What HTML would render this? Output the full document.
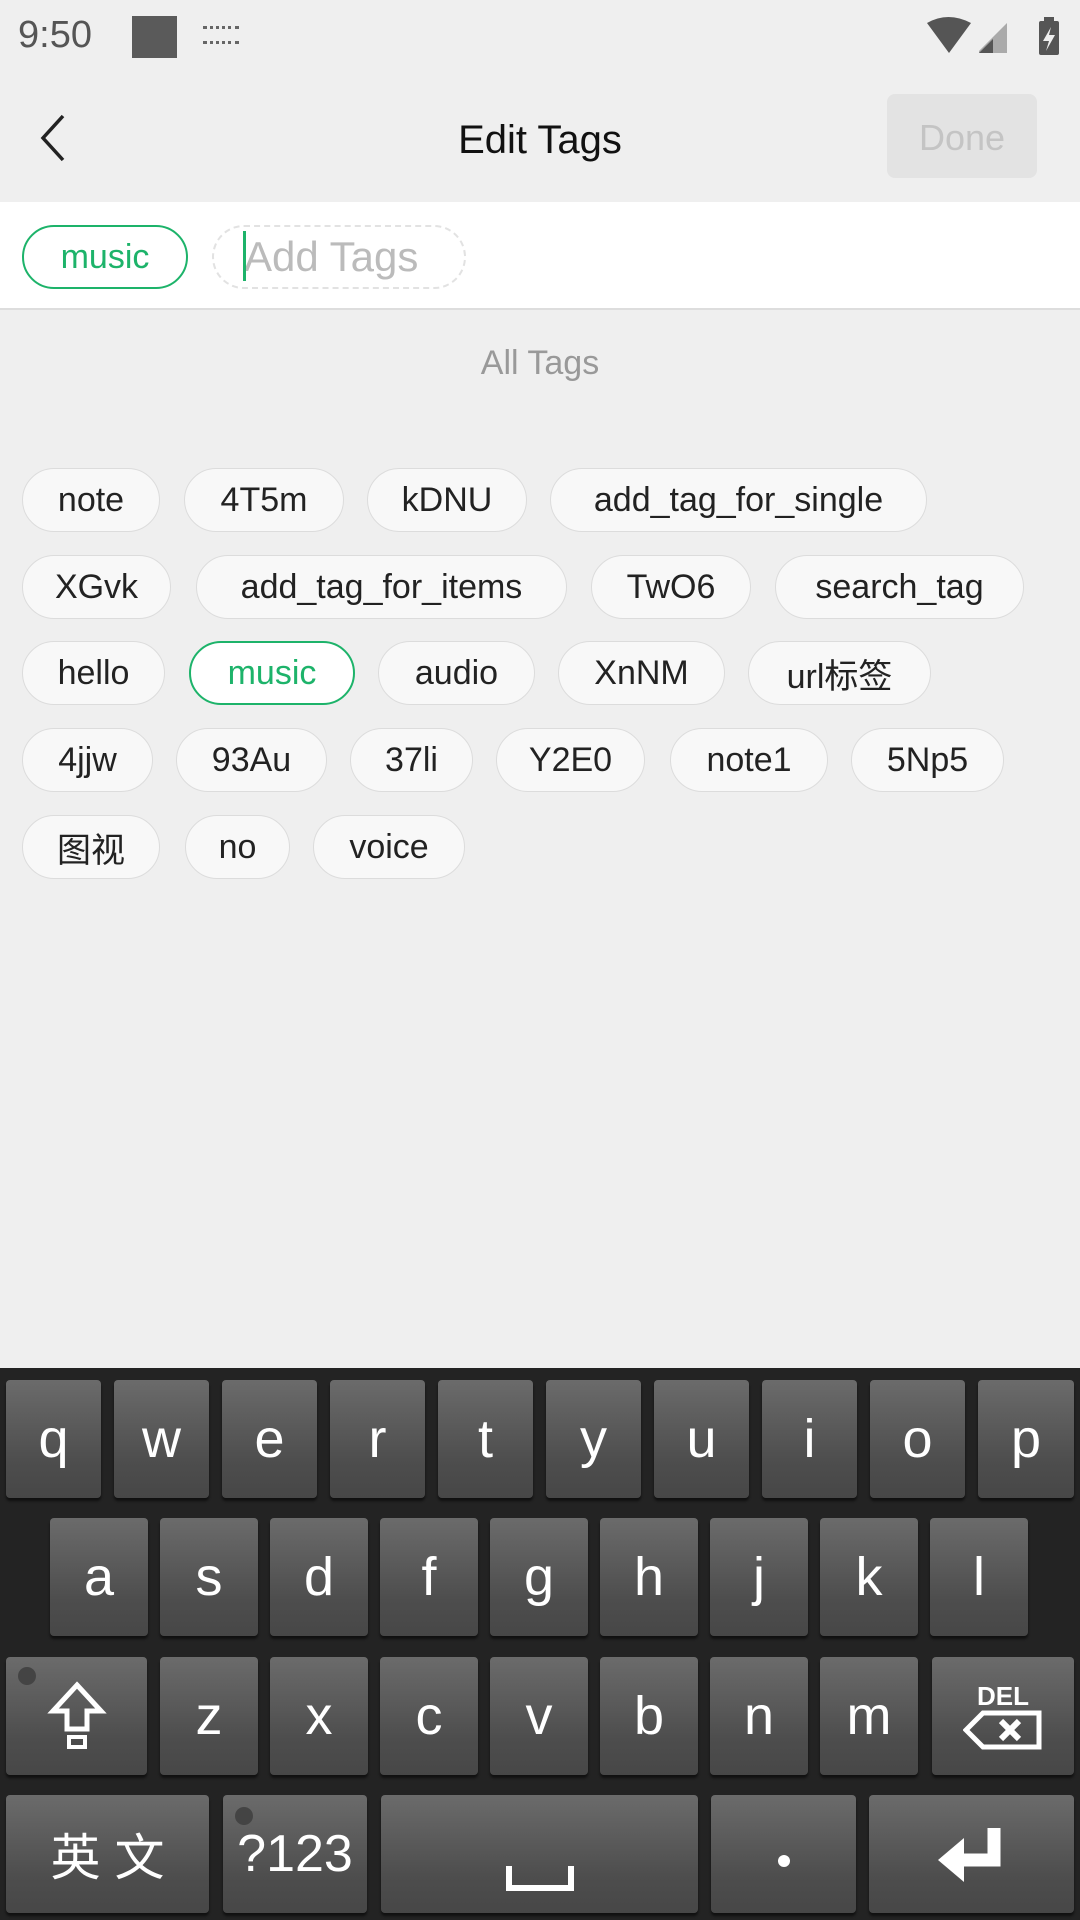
<!DOCTYPE html>
<html><head><meta charset="utf-8"><style>
*{margin:0;padding:0;box-sizing:border-box}
body{width:1080px;height:1920px;background:#efefef;font-family:"Liberation Sans","Noto Sans CJK SC",sans-serif;position:relative;overflow:hidden}
.a{position:absolute}
.tag{position:absolute;height:64px;border:1.5px solid #dcdcdc;background:#f8f8f8;border-radius:32px;font-size:34px;color:#222;display:flex;align-items:center;justify-content:center;white-space:nowrap}
.tag.g{border:2px solid #1db36a;color:#1db36a;background:#fff}
.kb{position:absolute;left:0;top:1368px;width:1080px;height:552px;background:#232323}
.k{position:absolute;border-radius:4px;background:linear-gradient(#6b6b6b,#4d4d4d 70%,#474747);box-shadow:0 3px 2px #111;color:#fff;font-size:54px;display:flex;align-items:center;justify-content:center;font-family:"Liberation Sans","Noto Sans CJK SC",sans-serif}
</style></head><body>
<div class="a" style="left:18px;top:14px;font-size:38px;color:#555">9:50</div>
<div class="a" style="left:132px;top:16px;width:45px;height:42px;background:#5a5a5a"></div>
<div class="a" style="left:203px;top:26px;width:36px;height:18px;border-top:3px dotted #666;border-bottom:3px dotted #666"></div>
<svg class="a" style="left:925px;top:15px" width="135" height="42" viewBox="0 0 135 42">
<path d="M2 8 Q23 -4 46 8 L24 38 Z" fill="#555"/>
<path d="M54 38 L54 36 L82 8 L82 38 Z" fill="#aaa"/><path d="M54 38 L68 24 L68 38Z" fill="#555"/>
<rect x="114" y="6" width="20" height="34" rx="2" fill="#555"/><rect x="119" y="2" width="10" height="5" fill="#555"/>
<path d="M126 12 L118 26 L124 26 L121 36 L130 20 L124 20 Z" fill="#eee"/>
</svg>
<svg class="a" style="left:38px;top:114px" width="30" height="48" viewBox="0 0 30 48"><path d="M25 2 L5 24 L25 46" fill="none" stroke="#222" stroke-width="3.5"/></svg>
<div class="a" style="left:0;width:1080px;top:118px;text-align:center;font-size:40px;color:#111">Edit Tags</div>
<div class="a" style="left:887px;top:94px;width:150px;height:84px;background:#e3e3e3;border-radius:8px;color:#c4c4c4;font-size:36px;display:flex;align-items:center;justify-content:center;padding-top:4px">Done</div>
<div class="a" style="left:0;top:202px;width:1080px;height:108px;background:#fff;border-bottom:2px solid #ddd"></div>
<div class="tag g" style="left:22px;top:225px;width:166px">music</div>
<div class="tag" style="left:212px;top:225px;width:254px;border:2px dashed #e2e2e2;background:#fff;color:#bbb;font-size:42px;justify-content:flex-start;padding-left:30px">Add Tags</div>
<div class="a" style="left:243px;top:231px;width:3px;height:50px;background:#1db36a"></div>
<div class="a" style="left:0;width:1080px;top:344px;text-align:center;font-size:34px;color:#999">All Tags</div>

<div class="tag" style="left:22px;top:468px;width:138px">note</div>
<div class="tag" style="left:184px;top:468px;width:160px">4T5m</div>
<div class="tag" style="left:367px;top:468px;width:160px">kDNU</div>
<div class="tag" style="left:550px;top:468px;width:377px">add_tag_for_single</div>

<div class="tag" style="left:22px;top:555px;width:149px">XGvk</div>
<div class="tag" style="left:196px;top:555px;width:371px">add_tag_for_items</div>
<div class="tag" style="left:591px;top:555px;width:160px">TwO6</div>
<div class="tag" style="left:775px;top:555px;width:249px">search_tag</div>

<div class="tag" style="left:22px;top:641px;width:143px">hello</div>
<div class="tag g" style="left:189px;top:641px;width:166px">music</div>
<div class="tag" style="left:378px;top:641px;width:157px">audio</div>
<div class="tag" style="left:558px;top:641px;width:167px">XnNM</div>
<div class="tag" style="left:748px;top:641px;width:183px">url标签</div>

<div class="tag" style="left:22px;top:728px;width:131px">4jjw</div>
<div class="tag" style="left:176px;top:728px;width:151px">93Au</div>
<div class="tag" style="left:350px;top:728px;width:123px">37li</div>
<div class="tag" style="left:496px;top:728px;width:149px">Y2E0</div>
<div class="tag" style="left:670px;top:728px;width:158px">note1</div>
<div class="tag" style="left:851px;top:728px;width:153px">5Np5</div>

<div class="tag" style="left:22px;top:815px;width:138px">图视</div>
<div class="tag" style="left:185px;top:815px;width:105px">no</div>
<div class="tag" style="left:313px;top:815px;width:152px">voice</div>

<div class="kb"></div>
<div class="k" style="left:6px;top:1380px;width:95px;height:118px">q</div>
<div class="k" style="left:114px;top:1380px;width:95px;height:118px">w</div>
<div class="k" style="left:222px;top:1380px;width:95px;height:118px">e</div>
<div class="k" style="left:330px;top:1380px;width:95px;height:118px">r</div>
<div class="k" style="left:438px;top:1380px;width:95px;height:118px">t</div>
<div class="k" style="left:546px;top:1380px;width:95px;height:118px">y</div>
<div class="k" style="left:654px;top:1380px;width:95px;height:118px">u</div>
<div class="k" style="left:762px;top:1380px;width:95px;height:118px">i</div>
<div class="k" style="left:870px;top:1380px;width:95px;height:118px">o</div>
<div class="k" style="left:978px;top:1380px;width:96px;height:118px">p</div>

<div class="k" style="left:50px;top:1518px;width:98px;height:118px">a</div>
<div class="k" style="left:160px;top:1518px;width:98px;height:118px">s</div>
<div class="k" style="left:270px;top:1518px;width:98px;height:118px">d</div>
<div class="k" style="left:380px;top:1518px;width:98px;height:118px">f</div>
<div class="k" style="left:490px;top:1518px;width:98px;height:118px">g</div>
<div class="k" style="left:600px;top:1518px;width:98px;height:118px">h</div>
<div class="k" style="left:710px;top:1518px;width:98px;height:118px">j</div>
<div class="k" style="left:820px;top:1518px;width:98px;height:118px">k</div>
<div class="k" style="left:930px;top:1518px;width:98px;height:118px">l</div>

<div class="k" style="left:6px;top:1657px;width:141px;height:118px"><svg width="60" height="70" viewBox="0 0 60 70"><path d="M30 4 L54 30 L40 30 L40 48 L20 48 L20 30 L6 30 Z" fill="none" stroke="#fff" stroke-width="5"/><rect x="22" y="56" width="16" height="10" fill="none" stroke="#fff" stroke-width="4"/></svg></div>
<div class="a" style="left:18px;top:1667px;width:18px;height:18px;border-radius:50%;background:#444"></div>
<div class="k" style="left:160px;top:1657px;width:98px;height:118px">z</div>
<div class="k" style="left:270px;top:1657px;width:98px;height:118px">x</div>
<div class="k" style="left:380px;top:1657px;width:98px;height:118px">c</div>
<div class="k" style="left:490px;top:1657px;width:98px;height:118px">v</div>
<div class="k" style="left:600px;top:1657px;width:98px;height:118px">b</div>
<div class="k" style="left:710px;top:1657px;width:98px;height:118px">n</div>
<div class="k" style="left:820px;top:1657px;width:98px;height:118px">m</div>
<div class="k" style="left:932px;top:1657px;width:142px;height:118px;flex-direction:column"><div style="font-size:26px;font-weight:bold;line-height:28px">DEL</div><svg width="80" height="40" viewBox="0 0 80 40"><path d="M20 3 L76 3 L76 37 L20 37 L3 20 Z" fill="none" stroke="#fff" stroke-width="5"/><path d="M38 11 L56 29 M56 11 L38 29" stroke="#fff" stroke-width="6"/></svg></div>

<div class="k" style="left:6px;top:1795px;width:203px;height:118px;font-size:50px">英 文</div>
<div class="k" style="left:223px;top:1795px;width:144px;height:118px;font-size:52px">?123</div>
<div class="a" style="left:235px;top:1807px;width:18px;height:18px;border-radius:50%;background:#444"></div>
<div class="k" style="left:381px;top:1795px;width:317px;height:118px"><svg width="70" height="30" viewBox="0 0 70 30" style="margin-top:50px"><path d="M4 2 L4 24 L66 24 L66 2" fill="none" stroke="#fff" stroke-width="6"/></svg></div>
<div class="k" style="left:711px;top:1795px;width:145px;height:118px"><div style="width:12px;height:12px;border-radius:50%;background:#fff;margin-top:14px"></div></div>
<div class="k" style="left:869px;top:1795px;width:205px;height:118px"><svg width="72" height="60" viewBox="0 0 72 60"><path d="M58 4 L58 36 L26 36" fill="none" stroke="#fff" stroke-width="13"/><path d="M2 36 L28 14 L28 58 Z" fill="#fff"/></svg></div>
</body></html>
